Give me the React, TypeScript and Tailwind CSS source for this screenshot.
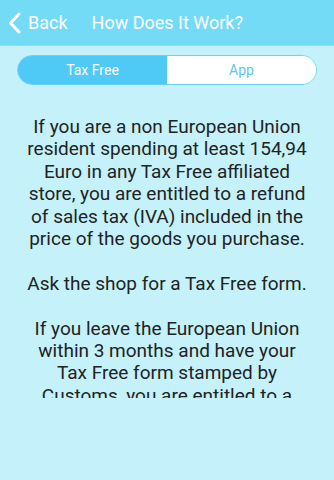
import React from 'react';

const paragraphs = [
  [
    'If you are a non European Union',
    'resident spending at least 154,94',
    'Euro in any Tax Free affiliated',
    'store, you are entitled to a refund',
    'of sales tax (IVA) included in the',
    'price of the goods you purchase.',
  ],
  ['Ask the shop for a Tax Free form.'],
  [
    'If you leave the European Union',
    'within 3 months and have your',
    'Tax Free form stamped by',
    'Customs, you are entitled to a',
    'refund.',
  ],
];

const App = () => {
  return (
    <div className="w-[334px] h-[480px] bg-[#c5f2fa] flex flex-col font-['Roboto',sans-serif] overflow-hidden">
      <div className="h-[46px] shrink-0 bg-[#74dbf7] border-b border-[#9fd9e8] flex items-center text-white">
        <div className="flex items-center pl-[8px] gap-[7px] cursor-pointer">
          <svg width="13" height="22" viewBox="0 0 13 22" fill="none">
            <path d="M11 2 L2.5 11 L11 20" stroke="white" strokeWidth="3" strokeLinecap="round" strokeLinejoin="round" />
          </svg>
          <span className="text-[18px] leading-none">Back</span>
        </div>
        <div className="ml-[24px] text-[18px] leading-none">How Does It Work?</div>
      </div>

      <div className="px-[17px] pt-[9px]">
        <div className="h-[30px] flex rounded-full border border-[#6dd2f8] overflow-hidden text-[14px]">
          <div className="w-1/2 bg-[#4fc9f6] text-white flex items-center justify-center">Tax Free</div>
          <div className="w-1/2 bg-white text-[#5cc8f0] flex items-center justify-center">App</div>
        </div>
      </div>

      <div className="mt-[31px] h-[282px] overflow-hidden text-center text-[19px] leading-[22.4px] text-[#222222] flex flex-col gap-[22.4px]">
        {paragraphs.map(lines => (
          <p key={lines[0]}>
            {lines.map(line => (
              <span key={line} className="block whitespace-nowrap">
                {line}
              </span>
            ))}
          </p>
        ))}
      </div>
    </div>
  );
};

export default App;
